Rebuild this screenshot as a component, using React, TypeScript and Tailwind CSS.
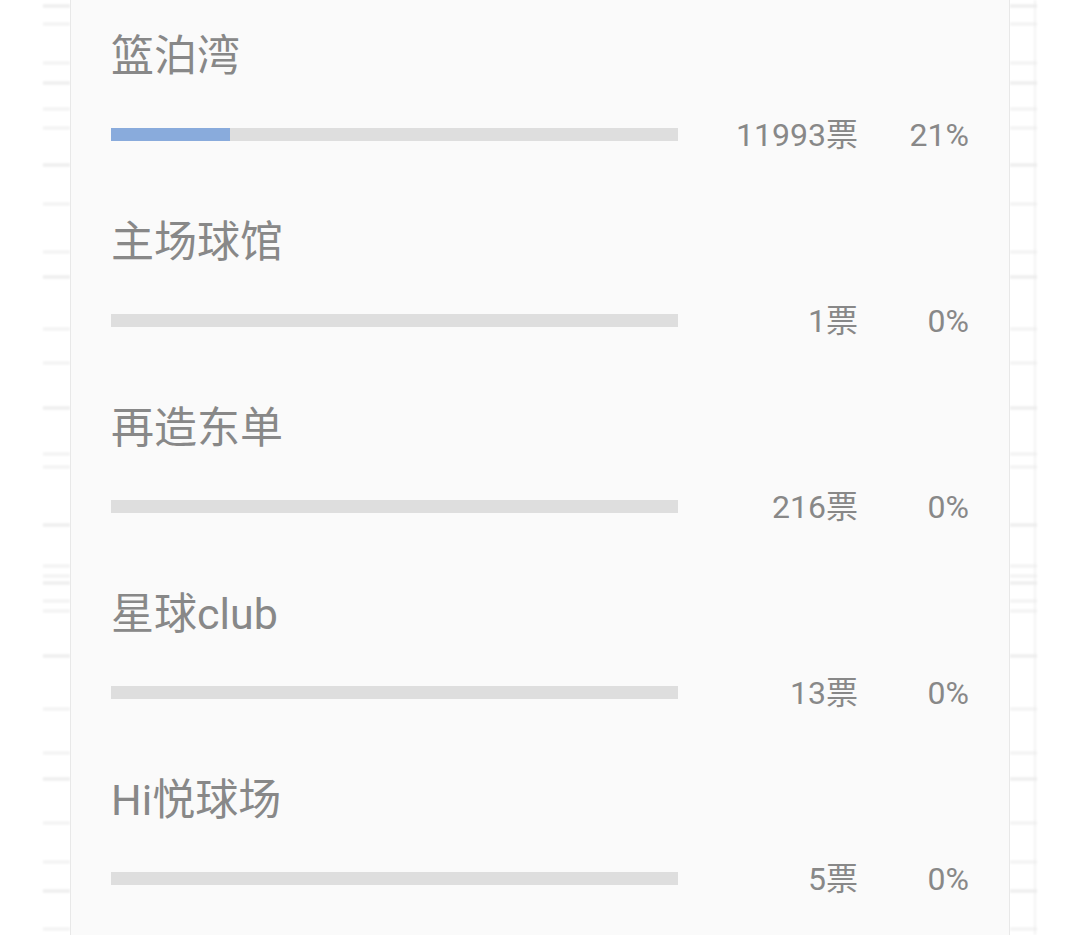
import React from "react";

const rows = [
  { name: "篮泊湾", votes: "11993票", pct: "21%", fill: 21 },
  { name: "主场球馆", votes: "1票", pct: "0%", fill: 0 },
  { name: "再造东单", votes: "216票", pct: "0%", fill: 0 },
  { name: "星球club", votes: "13票", pct: "0%", fill: 0 },
  { name: "Hi悦球场", votes: "5票", pct: "0%", fill: 0 },
];

const lineYs = [6, 24, 63, 83, 109, 128, 165, 204, 252, 277, 329, 363, 408, 454, 467, 525, 566, 576, 583, 601, 611, 656, 709, 753, 779, 823, 862, 891, 929];

function Gutter({ side }: { side: "left" | "right" }) {
  return (
    <svg width="70" height="935" className="block shrink-0">
      <defs>
        <filter id={`blur-${side}`} x="-10%" y="-200%" width="120%" height="500%">
          <feGaussianBlur stdDeviation="0.8" />
        </filter>
      </defs>
      <g filter={`url(#blur-${side})`}>
        {side === "right" && <line x1="25" y1="0" x2="25" y2="935" stroke="#f3f3f3" strokeWidth="2" />}
        {lineYs.map((y, i) => (
          <rect
            key={i}
            x={side === "left" ? 43 : 0}
            y={y - 1.5}
            width="27"
            height="3"
            fill="#e9e9e9"
            opacity={i % 3 === 0 ? 0.85 : 0.6}
          />
        ))}
      </g>
    </svg>
  );
}

export default function App() {
  return (
    <div
      className="flex w-[1080px] h-[935px] overflow-hidden bg-white"
      style={{ fontFamily: "Roboto, 'Noto Sans CJK SC', sans-serif" }}
    >
      <Gutter side="left" />
      <div className="w-[940px] h-[935px] shrink-0 bg-[#fafafa] border-l border-r border-[#e8e8e8] pl-[40px] pr-[40px] pt-[15px] text-[#888888]">
        {rows.map((r, i) => (
          <div key={i} className="h-[186px]">
            <div className="h-[80px] pt-[1px] leading-[80px] text-[43px]">{r.name}</div>
            <div className="h-[78px] flex items-center">
              <div className="w-[567px] h-[13px] bg-[#dedede] flex">
                <div className="h-full bg-[#89abdc]" style={{ width: `${r.fill}%` }} />
              </div>
              <div className="w-[180px] pt-[2px] text-right text-[32px] leading-none">{r.votes}</div>
              <div className="w-[111px] pt-[2px] text-right text-[32px] leading-none">{r.pct}</div>
            </div>
          </div>
        ))}
      </div>
      <Gutter side="right" />
    </div>
  );
}
